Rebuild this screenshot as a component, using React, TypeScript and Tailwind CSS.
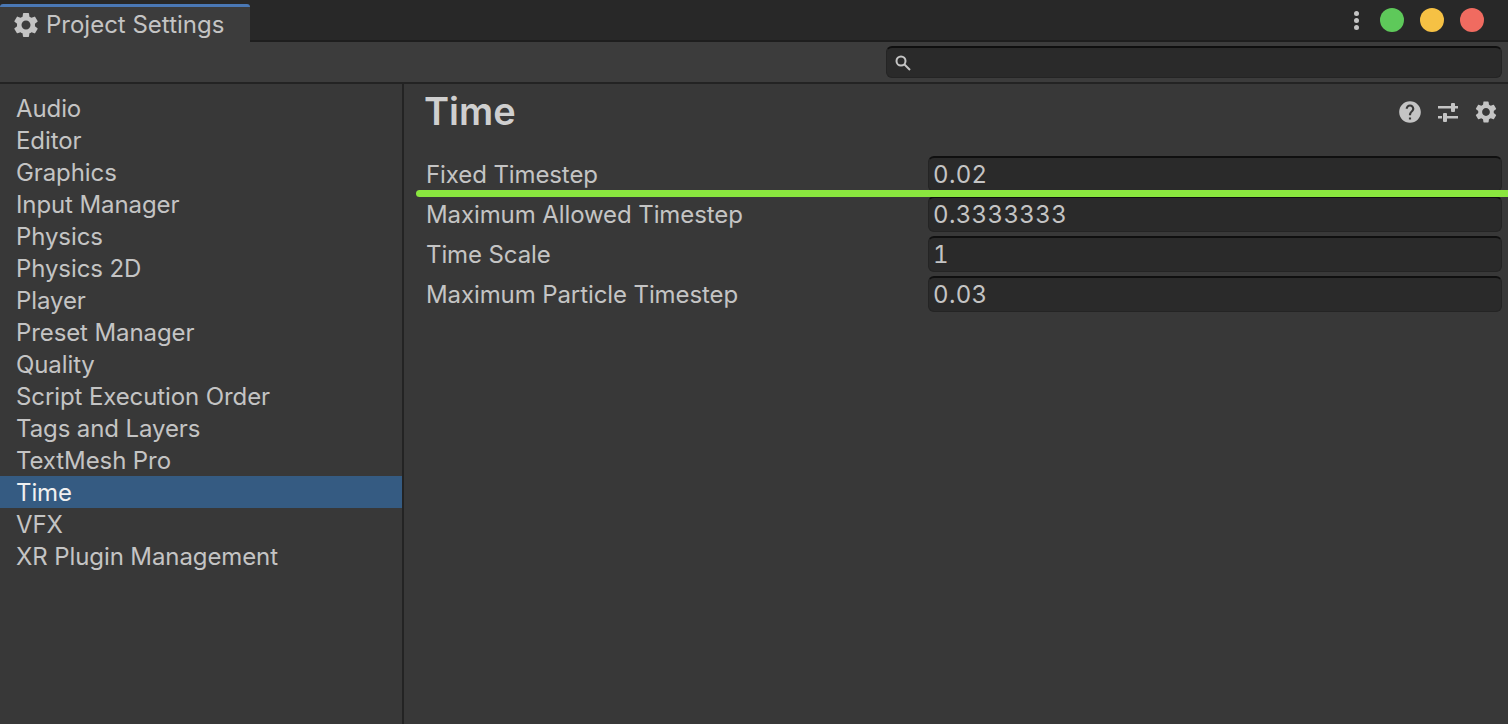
import React from 'react'
import { MdSettings, MdHelp } from 'react-icons/md'

const sections = [
  'Audio',
  'Editor',
  'Graphics',
  'Input Manager',
  'Physics',
  'Physics 2D',
  'Player',
  'Preset Manager',
  'Quality',
  'Script Execution Order',
  'Tags and Layers',
  'TextMesh Pro',
  'Time',
  'VFX',
  'XR Plugin Management'
]

const fields = [
  { label: 'Fixed Timestep', value: '0.02' },
  { label: 'Maximum Allowed Timestep', value: '0.3333333' },
  { label: 'Time Scale', value: '1' },
  { label: 'Maximum Particle Timestep', value: '0.03' }
]

const SlidersIcon = () => (
  <svg viewBox="0 0 20 20" className="h-5 w-5" fill="currentColor">
    <rect x="0" y="3" width="13" height="2.5" />
    <rect x="13" y="0" width="4" height="9" rx="1" />
    <rect x="17" y="3" width="3" height="2.5" />
    <rect x="0" y="13" width="4" height="2.5" />
    <rect x="5" y="10" width="4" height="9" rx="1" />
    <rect x="9" y="13" width="11" height="2.5" />
  </svg>
)

const SearchIcon = () => (
  <svg viewBox="0 0 16 16" className="h-4 w-4" fill="none" stroke="currentColor" strokeWidth="2">
    <circle cx="6" cy="6" r="4.5" />
    <path d="M9.5 9.5 15 15" />
  </svg>
)

export default function App() {
  return (
    <div className="relative flex h-[724px] w-[1508px] flex-col overflow-hidden bg-[#383838] font-['Inter',sans-serif] text-[24px] tracking-[-0.1px] text-[#c4c4c4]">
      {/* Title bar */}
      <div className="flex h-[42px] items-stretch border-b-2 border-[#1e1e1e] bg-[#282828]">
        <div className="z-10 mt-1 -mb-[2px] flex w-[250px] items-center gap-[5px] rounded-t-[3px] border-t-[3px] border-[#4a78b5] bg-[#3c3c3c] pl-[11px]">
          <MdSettings className="h-[30px] w-[30px] text-[#c4c4c4]" />
          <span className="tracking-normal">Project Settings</span>
        </div>
        <div className="ml-auto flex items-center pr-[24px]">
          <div className="mr-[21px] flex flex-col gap-[2px]">
            <span className="h-[5px] w-[5px] rounded-full bg-[#c4c4c4]" />
            <span className="h-[5px] w-[5px] rounded-full bg-[#c4c4c4]" />
            <span className="h-[5px] w-[5px] rounded-full bg-[#c4c4c4]" />
          </div>
          <div className="flex gap-4">
            <span className="h-6 w-6 rounded-full bg-[#5ec95a]" />
            <span className="h-6 w-6 rounded-full bg-[#f6c144]" />
            <span className="h-6 w-6 rounded-full bg-[#f06b60]" />
          </div>
        </div>
      </div>

      {/* Toolbar */}
      <div className="flex h-[42px] items-center justify-end border-b-2 border-[#232323] bg-[#3c3c3c] pr-[6px]">
        <div className="flex h-[32px] w-[616px] items-center rounded-[6px] border border-[#242424] border-t-2 border-t-[#0f0f0f] bg-[#2a2a2a] pl-[8px]">
          <SearchIcon />
        </div>
      </div>

      <div className="flex min-h-0 flex-1">
        {/* Sidebar */}
        <div className="w-[404px] shrink-0 border-r-2 border-[#232323] pt-2">
          {sections.map((name) => (
            <div
              key={name}
              className={`flex h-8 items-center pl-4 pt-[2px] ${name === 'Time' ? 'bg-[#355b82] text-[#f0f0f0]' : ''}`}
            >
              {name}
            </div>
          ))}
        </div>

        {/* Content */}
        <div className="min-w-0 flex-1 pl-[22px] pr-[6px]">
          <div className="flex h-[54px] items-center justify-between">
            <h1 className="-ml-[2px] text-[38px] font-semibold tracking-normal text-[#cfcfcf]">Time</h1>
            <div className="flex items-center gap-[12px] pr-[3px] pt-[2px]">
              <MdHelp className="h-[26px] w-[26px]" />
              <div className="flex h-[26px] w-[26px] items-center justify-center pt-[2px]">
                <SlidersIcon />
              </div>
              <MdSettings className="h-[26px] w-[26px]" />
            </div>
          </div>
          <div className="mt-[18px] flex flex-col gap-1">
            {fields.map((f) => (
              <div key={f.label} className="flex h-9 items-center">
                <span className="w-[502px] shrink-0 pt-[2px]">{f.label}</span>
                <div className="flex h-9 flex-1 items-center rounded-[6px] border border-[#242424] border-t-2 border-t-[#0f0f0f] bg-[#2a2a2a] pl-[4px] tabular-nums tracking-[0.35px]">
                  {f.value}
                </div>
              </div>
            ))}
          </div>
        </div>
      </div>

      {/* Green annotation line */}
      <div className="absolute left-[416px] right-0 top-[190px] h-[7px] rounded-l-full bg-[#8ae63f]" />
    </div>
  )
}
